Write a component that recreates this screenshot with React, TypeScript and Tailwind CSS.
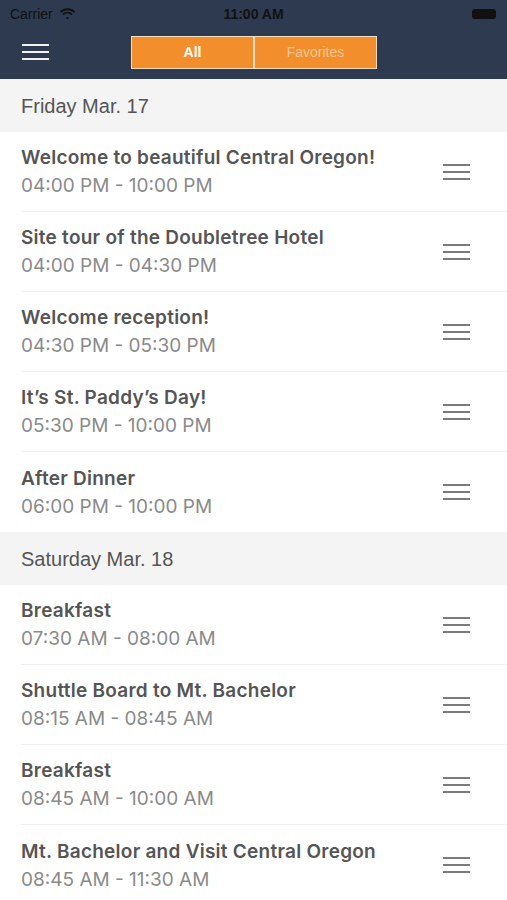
import React from "react"

type Item = { title: string; time: string }

const days: { label: string; items: Item[] }[] = [
	{
		label: "Friday Mar. 17",
		items: [
			{ title: "Welcome to beautiful Central Oregon!", time: "04:00 PM - 10:00 PM" },
			{ title: "Site tour of the Doubletree Hotel", time: "04:00 PM - 04:30 PM" },
			{ title: "Welcome reception!", time: "04:30 PM - 05:30 PM" },
			{ title: "It’s St. Paddy’s Day!", time: "05:30 PM - 10:00 PM" },
			{ title: "After Dinner", time: "06:00 PM - 10:00 PM" },
		],
	},
	{
		label: "Saturday Mar. 18",
		items: [
			{ title: "Breakfast", time: "07:30 AM - 08:00 AM" },
			{ title: "Shuttle Board to Mt. Bachelor", time: "08:15 AM - 08:45 AM" },
			{ title: "Breakfast", time: "08:45 AM - 10:00 AM" },
			{ title: "Mt. Bachelor and Visit Central Oregon", time: "08:45 AM - 11:30 AM" },
		],
	},
]

function Lines({ color }: { color: string }) {
	return (
		<div className="flex flex-col gap-[5px] w-[27px]">
			<div className={`h-[2px] w-full ${color}`} />
			<div className={`h-[2px] w-full ${color}`} />
			<div className={`h-[2px] w-full ${color}`} />
		</div>
	)
}

function Wifi() {
	return (
		<svg width="17" height="12" viewBox="0 0 17 12" fill="#111">
			<path d="M8.5 2.2c2.4 0 4.6.9 6.3 2.5l1.3-1.4C14.1 1.4 11.4.3 8.5.3S2.9 1.4.9 3.3l1.3 1.4C3.9 3.1 6.1 2.2 8.5 2.2z" />
			<path d="M8.5 5.6c1.5 0 2.8.6 3.9 1.5l1.3-1.4C12.3 4.4 10.5 3.7 8.5 3.7S4.7 4.4 3.3 5.7l1.3 1.4c1.1-.9 2.4-1.5 3.9-1.5z" />
			<path d="M8.5 8.9c.7 0 1.3.2 1.7.6L8.5 11.6 6.8 9.5c.4-.4 1-.6 1.7-.6z" />
		</svg>
	)
}

export default function App() {
	return (
		<div className="w-[507px] h-[900px] overflow-hidden bg-white font-['Liberation_Sans',Arial,sans-serif]">
			{/* Status + nav bar */}
			<div className="bg-[#2d3a50]">
				<div className="h-[28px] flex items-center justify-between px-[10px] text-[#111] text-[14px]">
					<div className="flex items-center gap-[6px] w-[120px]">
						<span>Carrier</span>
						<Wifi />
					</div>
					<span className="font-bold">11:00 AM</span>
					<div className="w-[120px] flex justify-end pr-[1px]">
						<div className="w-[24px] h-[10px] rounded-[3px] bg-[#111]" />
					</div>
				</div>
				<div className="h-[51px] flex items-center relative">
					<div className="pl-[22px] pb-[3px]">
						<Lines color="bg-[#f2f2f2]" />
					</div>
					<div className="absolute left-[131px] top-[8px] flex w-[246px] h-[33px] border border-[#f6dcc0] bg-[#f28e2b] text-[14px]">
						<div className="flex-1 flex items-center justify-center font-bold text-white border-r-2 border-[#f6dcc0]">All</div>
						<div className="flex-1 flex items-center justify-center text-[#f9c692]">Favorites</div>
					</div>
				</div>
			</div>

			{days.map((day) => (
				<div key={day.label}>
					<div className="h-[53px] bg-[#f4f4f4] flex items-center px-[21px] text-[20px] text-[#555]">
						{day.label}
					</div>
					{day.items.map((item, i) => (
						<div key={i} className="h-[80px] flex pl-[21px]">
							<div
								className={`flex-1 flex items-center pr-[37px] ${
									i < day.items.length - 1 ? "border-b border-[#f0f0f0]" : ""
								}`}
							>
								<div className="flex-1 pt-[1px] font-['Inter',sans-serif]">
									<div className="text-[19px] font-semibold tracking-[0.25px] text-[#555] leading-[24px]">{item.title}</div>
									<div className="text-[19px] text-[#8a8a8a] leading-[24px] mt-[4px]">{item.time}</div>
								</div>
								<Lines color="bg-[#7a7a7a]" />
							</div>
						</div>
					))}
				</div>
			))}
		</div>
	)
}
